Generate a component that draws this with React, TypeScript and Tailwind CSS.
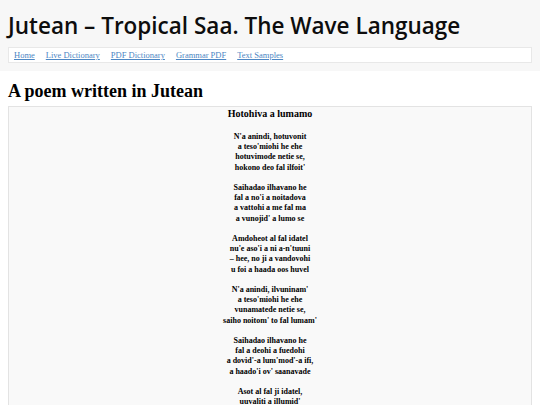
const NAV = ["Home", "Live Dictionary", "PDF Dictionary", "Grammar PDF", "Text Samples"];

const STANZAS = [
  ["N'a anindi, hotuvonit", "a teso'miohi he ehe", "hotuvimode netie se,", "hokono deo fal ilfoit'"],
  ["Saihadao ilhavano he", "fal a no'i a noitadova", "a vattohi a me fal ma", "a vunojid' a lumo se"],
  ["Amdoheot al fal idatel", "nu'e aso'i a ni a-n'tuuni", "– hee, no ji a vandovohi", "u foi a haada oos huvel"],
  ["N'a anindi, ilvuninam'", "a teso'miohi he ehe", "vunamatede netie se,", "saiho noitom' to fal lumam'"],
  ["Saihadao ilhavano he", "fal a deohi a fuedohi", "a dovid'-a lum'mod'-a ifi,", "a haado'i ov' saanavade"],
  ["Asot al fal ji idatel,", "uuvaliti a illumid'", "hee, no ji a vandovohi", "u foi a haada oos huvel"],
];

export default function App() {
  return (
    <div className="min-h-[405px] bg-white font-['Liberation_Serif',serif] text-black">
      <header className="bg-[#f7f7f7] px-2 pt-[11px] pb-[8px]">
        <h1 className="font-['Open_Sans',sans-serif] text-[22.5px] font-semibold leading-[30px] text-[#0d0d0d]">
          Jutean – Tropical Saa. The Wave Language
        </h1>
        <nav className="mt-[6px] flex gap-[11px] border border-[#e8e8e8] bg-white pl-[5px]">
          {NAV.map((n) => (
            <a key={n} href="#" className="text-[8.5px] leading-[14px] text-[#4d87c4] underline">
              {n}
            </a>
          ))}
        </nav>
      </header>
      <main className="px-2 pt-[9px]">
        <h2 className="text-[18px] font-bold leading-[22px]">A poem written in Jutean</h2>
        <div className="mt-[4px] border border-[#e3e3e3] bg-[#f9f9f9] pt-[1px] pb-4 text-center">
          <h3 className="text-[10px] font-bold leading-[12px]">Hotohiva a lumamo</h3>
          <div className="mt-[12px] flex flex-col gap-[10.2px] text-[8px] font-bold leading-[10.2px]">
            {STANZAS.map((s, i) => (
              <p key={i}>
                {s.map((l, j) => (
                  <span key={j} className="block">
                    {l}
                  </span>
                ))}
              </p>
            ))}
          </div>
        </div>
      </main>
    </div>
  );
}
